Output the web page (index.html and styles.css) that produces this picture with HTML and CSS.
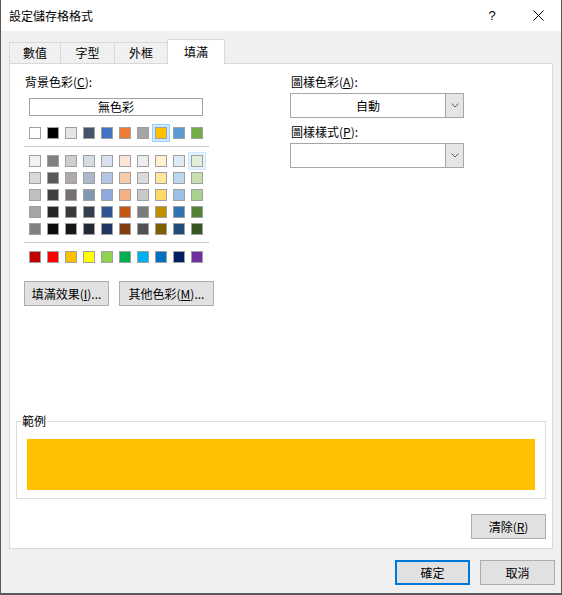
FILE: index.html
```html
<!DOCTYPE html>
<html lang="zh-Hant">
<head>
<meta charset="utf-8">
<title>設定儲存格格式</title>
<link rel="stylesheet" href="styles.css">
</head>
<body>
<div class="dialog">
  <div class="titlebar">
    <span class="title">設定儲存格格式</span>
    <span class="tb-btn help">?</span>
    <span class="tb-btn close">
      <svg width="11" height="11" viewBox="0 0 11 11"><path d="M0.5 0.5 L10.5 10.5 M10.5 0.5 L0.5 10.5" stroke="#000" stroke-width="1" fill="none"/></svg>
    </span>
  </div>

  <div class="tabs">
    <div class="tab t1">數值</div>
    <div class="tab t2">字型</div>
    <div class="tab t3">外框</div>
    <div class="tab active">填滿</div>
  </div>

  <div class="panel">
    <div class="top">
      <div class="left">
        <div class="label">背景色彩(<u>C</u>):</div>
        <div class="nocolor">無色彩</div>

        <div class="srow first">
          <span class="sw" style="background:#FFFFFF"></span>
          <span class="sw" style="background:#000000"></span>
          <span class="sw" style="background:#E7E6E6"></span>
          <span class="sw" style="background:#44546A"></span>
          <span class="sw" style="background:#4472C4"></span>
          <span class="sw" style="background:#ED7D31"></span>
          <span class="sw" style="background:#A5A5A5"></span>
          <span class="sw selected" style="background:#FFC000"></span>
          <span class="sw" style="background:#5B9BD5"></span>
          <span class="sw" style="background:#70AD47"></span>
        </div>
        <div class="sep"></div>
        <div class="theme">
          <div class="srow">
            <span class="sw" style="background:#F2F2F2"></span>
            <span class="sw" style="background:#7F7F7F"></span>
            <span class="sw" style="background:#D0CECE"></span>
            <span class="sw" style="background:#D6DCE4"></span>
            <span class="sw" style="background:#D9E1F2"></span>
            <span class="sw" style="background:#FCE4D6"></span>
            <span class="sw" style="background:#EDEDED"></span>
            <span class="sw" style="background:#FFF2CC"></span>
            <span class="sw" style="background:#DDEBF7"></span>
            <span class="sw hover" style="background:#E2EFDA"></span>
          </div>
          <div class="srow">
            <span class="sw" style="background:#D9D9D9"></span>
            <span class="sw" style="background:#595959"></span>
            <span class="sw" style="background:#AEAAAA"></span>
            <span class="sw" style="background:#ACB9CA"></span>
            <span class="sw" style="background:#B4C6E7"></span>
            <span class="sw" style="background:#F8CBAD"></span>
            <span class="sw" style="background:#DBDBDB"></span>
            <span class="sw" style="background:#FFE699"></span>
            <span class="sw" style="background:#BDD7EE"></span>
            <span class="sw" style="background:#C6E0B4"></span>
          </div>
          <div class="srow">
            <span class="sw" style="background:#BFBFBF"></span>
            <span class="sw" style="background:#404040"></span>
            <span class="sw" style="background:#757171"></span>
            <span class="sw" style="background:#8497B0"></span>
            <span class="sw" style="background:#8EA9DB"></span>
            <span class="sw" style="background:#F4B084"></span>
            <span class="sw" style="background:#C9C9C9"></span>
            <span class="sw" style="background:#FFD966"></span>
            <span class="sw" style="background:#9BC2E6"></span>
            <span class="sw" style="background:#A9D08E"></span>
          </div>
          <div class="srow">
            <span class="sw" style="background:#A6A6A6"></span>
            <span class="sw" style="background:#262626"></span>
            <span class="sw" style="background:#3A3838"></span>
            <span class="sw" style="background:#333F4F"></span>
            <span class="sw" style="background:#305496"></span>
            <span class="sw" style="background:#C65911"></span>
            <span class="sw" style="background:#7B7B7B"></span>
            <span class="sw" style="background:#BF8F00"></span>
            <span class="sw" style="background:#2F75B5"></span>
            <span class="sw" style="background:#548235"></span>
          </div>
          <div class="srow">
            <span class="sw" style="background:#808080"></span>
            <span class="sw" style="background:#0D0D0D"></span>
            <span class="sw" style="background:#161616"></span>
            <span class="sw" style="background:#222B35"></span>
            <span class="sw" style="background:#203764"></span>
            <span class="sw" style="background:#833C0C"></span>
            <span class="sw" style="background:#525252"></span>
            <span class="sw" style="background:#7F6000"></span>
            <span class="sw" style="background:#1F4E78"></span>
            <span class="sw" style="background:#375623"></span>
          </div>
        </div>
        <div class="sep"></div>
        <div class="srow standard">
          <span class="sw" style="background:#C00000"></span>
          <span class="sw" style="background:#FF0000"></span>
          <span class="sw" style="background:#FFC000"></span>
          <span class="sw" style="background:#FFFF00"></span>
          <span class="sw" style="background:#92D050"></span>
          <span class="sw" style="background:#00B050"></span>
          <span class="sw" style="background:#00B0F0"></span>
          <span class="sw" style="background:#0070C0"></span>
          <span class="sw" style="background:#002060"></span>
          <span class="sw" style="background:#7030A0"></span>
        </div>

        <div class="btns">
          <button class="btn b-fill">填滿效果(<u>I</u>)...</button>
          <button class="btn b-more">其他色彩(<u>M</u>)...</button>
        </div>
      </div>

      <div class="right">
        <div class="label">圖樣色彩(<u>A</u>):</div>
        <div class="combo">
          <span class="combo-text">自動</span>
          <span class="arrow"><svg width="8" height="5" viewBox="0 0 8 5"><path d="M0.5 0.5 L4 4 L7.5 0.5" stroke="#606060" stroke-width="1" fill="none"/></svg></span>
        </div>
        <div class="label second">圖樣樣式(<u>P</u>):</div>
        <div class="combo">
          <span class="combo-text"></span>
          <span class="arrow"><svg width="8" height="5" viewBox="0 0 8 5"><path d="M0.5 0.5 L4 4 L7.5 0.5" stroke="#606060" stroke-width="1" fill="none"/></svg></span>
        </div>
      </div>
    </div>

    <fieldset class="sample">
      <legend>範例</legend>
      <div class="sample-fill"></div>
    </fieldset>

    <div class="clear-row">
      <button class="btn b-clear">清除(<u>R</u>)</button>
    </div>
  </div>

  <div class="footer">
    <button class="btn b-ok">確定</button>
    <button class="btn b-cancel">取消</button>
  </div>
</div>
</body>
</html>
```

FILE: styles.css
```css
* { box-sizing: border-box; }

html, body {
  margin: 0;
  padding: 0;
}

body {
  background: #5a5a5a;
  font-family: "Noto Sans CJK TC", "Noto Sans", "Liberation Sans", sans-serif;
  font-size: 12px;
  line-height: 16px;
  color: #000;
  width: 562px;
  height: 595px;
  overflow: hidden;
}

u { text-decoration: underline; text-underline-offset: 1px; }

.dialog {
  margin-left: 1px;
  width: 560px;
  height: 593px;
  background: #f0f0f0;
  display: flex;
  flex-direction: column;
}

/* title bar */
.titlebar {
  height: 31px;
  background: #fff;
  display: flex;
  align-items: center;
  padding-left: 8px;
}
.title { flex: 1; }
.tb-btn {
  width: 46px;
  height: 31px;
  display: flex;
  align-items: center;
  justify-content: center;
}
.help { font-family: "Liberation Sans", sans-serif; font-size: 13px; }

/* tabs */
.tabs {
  height: 32px;
  padding-left: 8px;
  display: flex;
  align-items: flex-end;
}
.tab {
  height: 21px;
  border: 1px solid #d9d9d9;
  border-right: none;
  border-bottom: none;
  background: #f0f0f0;
  display: flex;
  align-items: center;
  justify-content: center;
}
.t1 { width: 51px; }
.t2 { width: 54px; }
.t3 { width: 53px; }
.tab.active {
  width: 58px;
  height: 25px;
  border-right: 1px solid #d9d9d9;
  background: #fff;
  margin-bottom: -1px;
  position: relative;
  z-index: 1;
  padding-bottom: 1px;
}

/* panel */
.panel {
  margin-left: 8px;
  width: 544px;
  height: 486px;
  background: #fff;
  border: 1px solid #d9d9d9;
  padding: 10px 0 0 14px;
  display: flex;
  flex-direction: column;
}

.top { display: flex; }
.left { width: 190px; }
.right { width: 174px; margin-left: 76px; }

.label { height: 16px; padding-left: 1px; white-space: nowrap; }
.label.second { margin-top: 6px; }

.nocolor {
  margin: 8px 0 0 5px;
  width: 174px;
  height: 18px;
  border: 1px solid #a0a0a0;
  display: flex;
  align-items: center;
  justify-content: center;
}

.srow {
  display: flex;
  gap: 6px;
  margin-left: 5px;
}
.srow.first { margin-top: 11px; }
.theme {
  margin-top: 8px;
  display: flex;
  flex-direction: column;
  gap: 5px;
}
.srow.standard { margin-top: 8px; }

.sw {
  width: 12px;
  height: 12px;
  border: 1px solid #a0a0a0;
  display: block;
}
.sw.selected {
  box-shadow: 0 0 0 2px #cce8ff, 0 0 0 3px #99d1ff;
}
.sw.hover {
  box-shadow: 0 0 0 2px #e5f3ff, 0 0 0 3px #cce8ff;
}

.sep {
  margin-top: 7px;
  width: 185px;
  height: 1px;
  background: #c8c8c8;
}

.btn {
  font-family: inherit;
  font-size: 12px;
  line-height: 16px;
  color: #000;
  background: #e1e1e1;
  border: 1px solid #adadad;
  border-radius: 0;
  height: 25px;
  padding: 0;
  display: flex;
  align-items: center;
  justify-content: center;
}

.btns {
  margin-top: 18px;
  display: flex;
  gap: 10px;
}
.b-fill { width: 85px; }
.b-more { width: 95px; }

/* combos */
.combo {
  margin-top: 3px;
  width: 174px;
  height: 25px;
  border: 1px solid #a6a6a6;
  display: flex;
}
.combo-text {
  flex: 1;
  display: flex;
  align-items: center;
  justify-content: center;
}
.arrow {
  width: 18px;
  border-left: 1px solid #a6a6a6;
  background: #e5e5e5;
  display: flex;
  align-items: center;
  justify-content: center;
}

/* sample */
.sample {
  margin: auto 5px 15px -8px;
  width: 530px;
  border: 1px solid #dcdcdc;
  padding: 0 10px 8px 10px;
  min-width: 0;
}
.sample legend {
  padding: 0 1px;
  margin-left: -6px;
  line-height: 16px;
}
.sample-fill {
  margin-top: 10px;
  height: 51px;
  background: #ffc000;
}

.clear-row {
  display: flex;
  justify-content: flex-end;
  margin-right: 6px;
  margin-bottom: 9px;
}
.b-clear { width: 75px; }

/* footer */
.footer {
  flex: 1;
  display: flex;
  justify-content: flex-end;
  gap: 10px;
  padding: 11px 6px 0 0;
}
.b-ok, .b-cancel { width: 75px; height: 25px; }
.b-ok { border: 2px solid #0078d7; }
```
